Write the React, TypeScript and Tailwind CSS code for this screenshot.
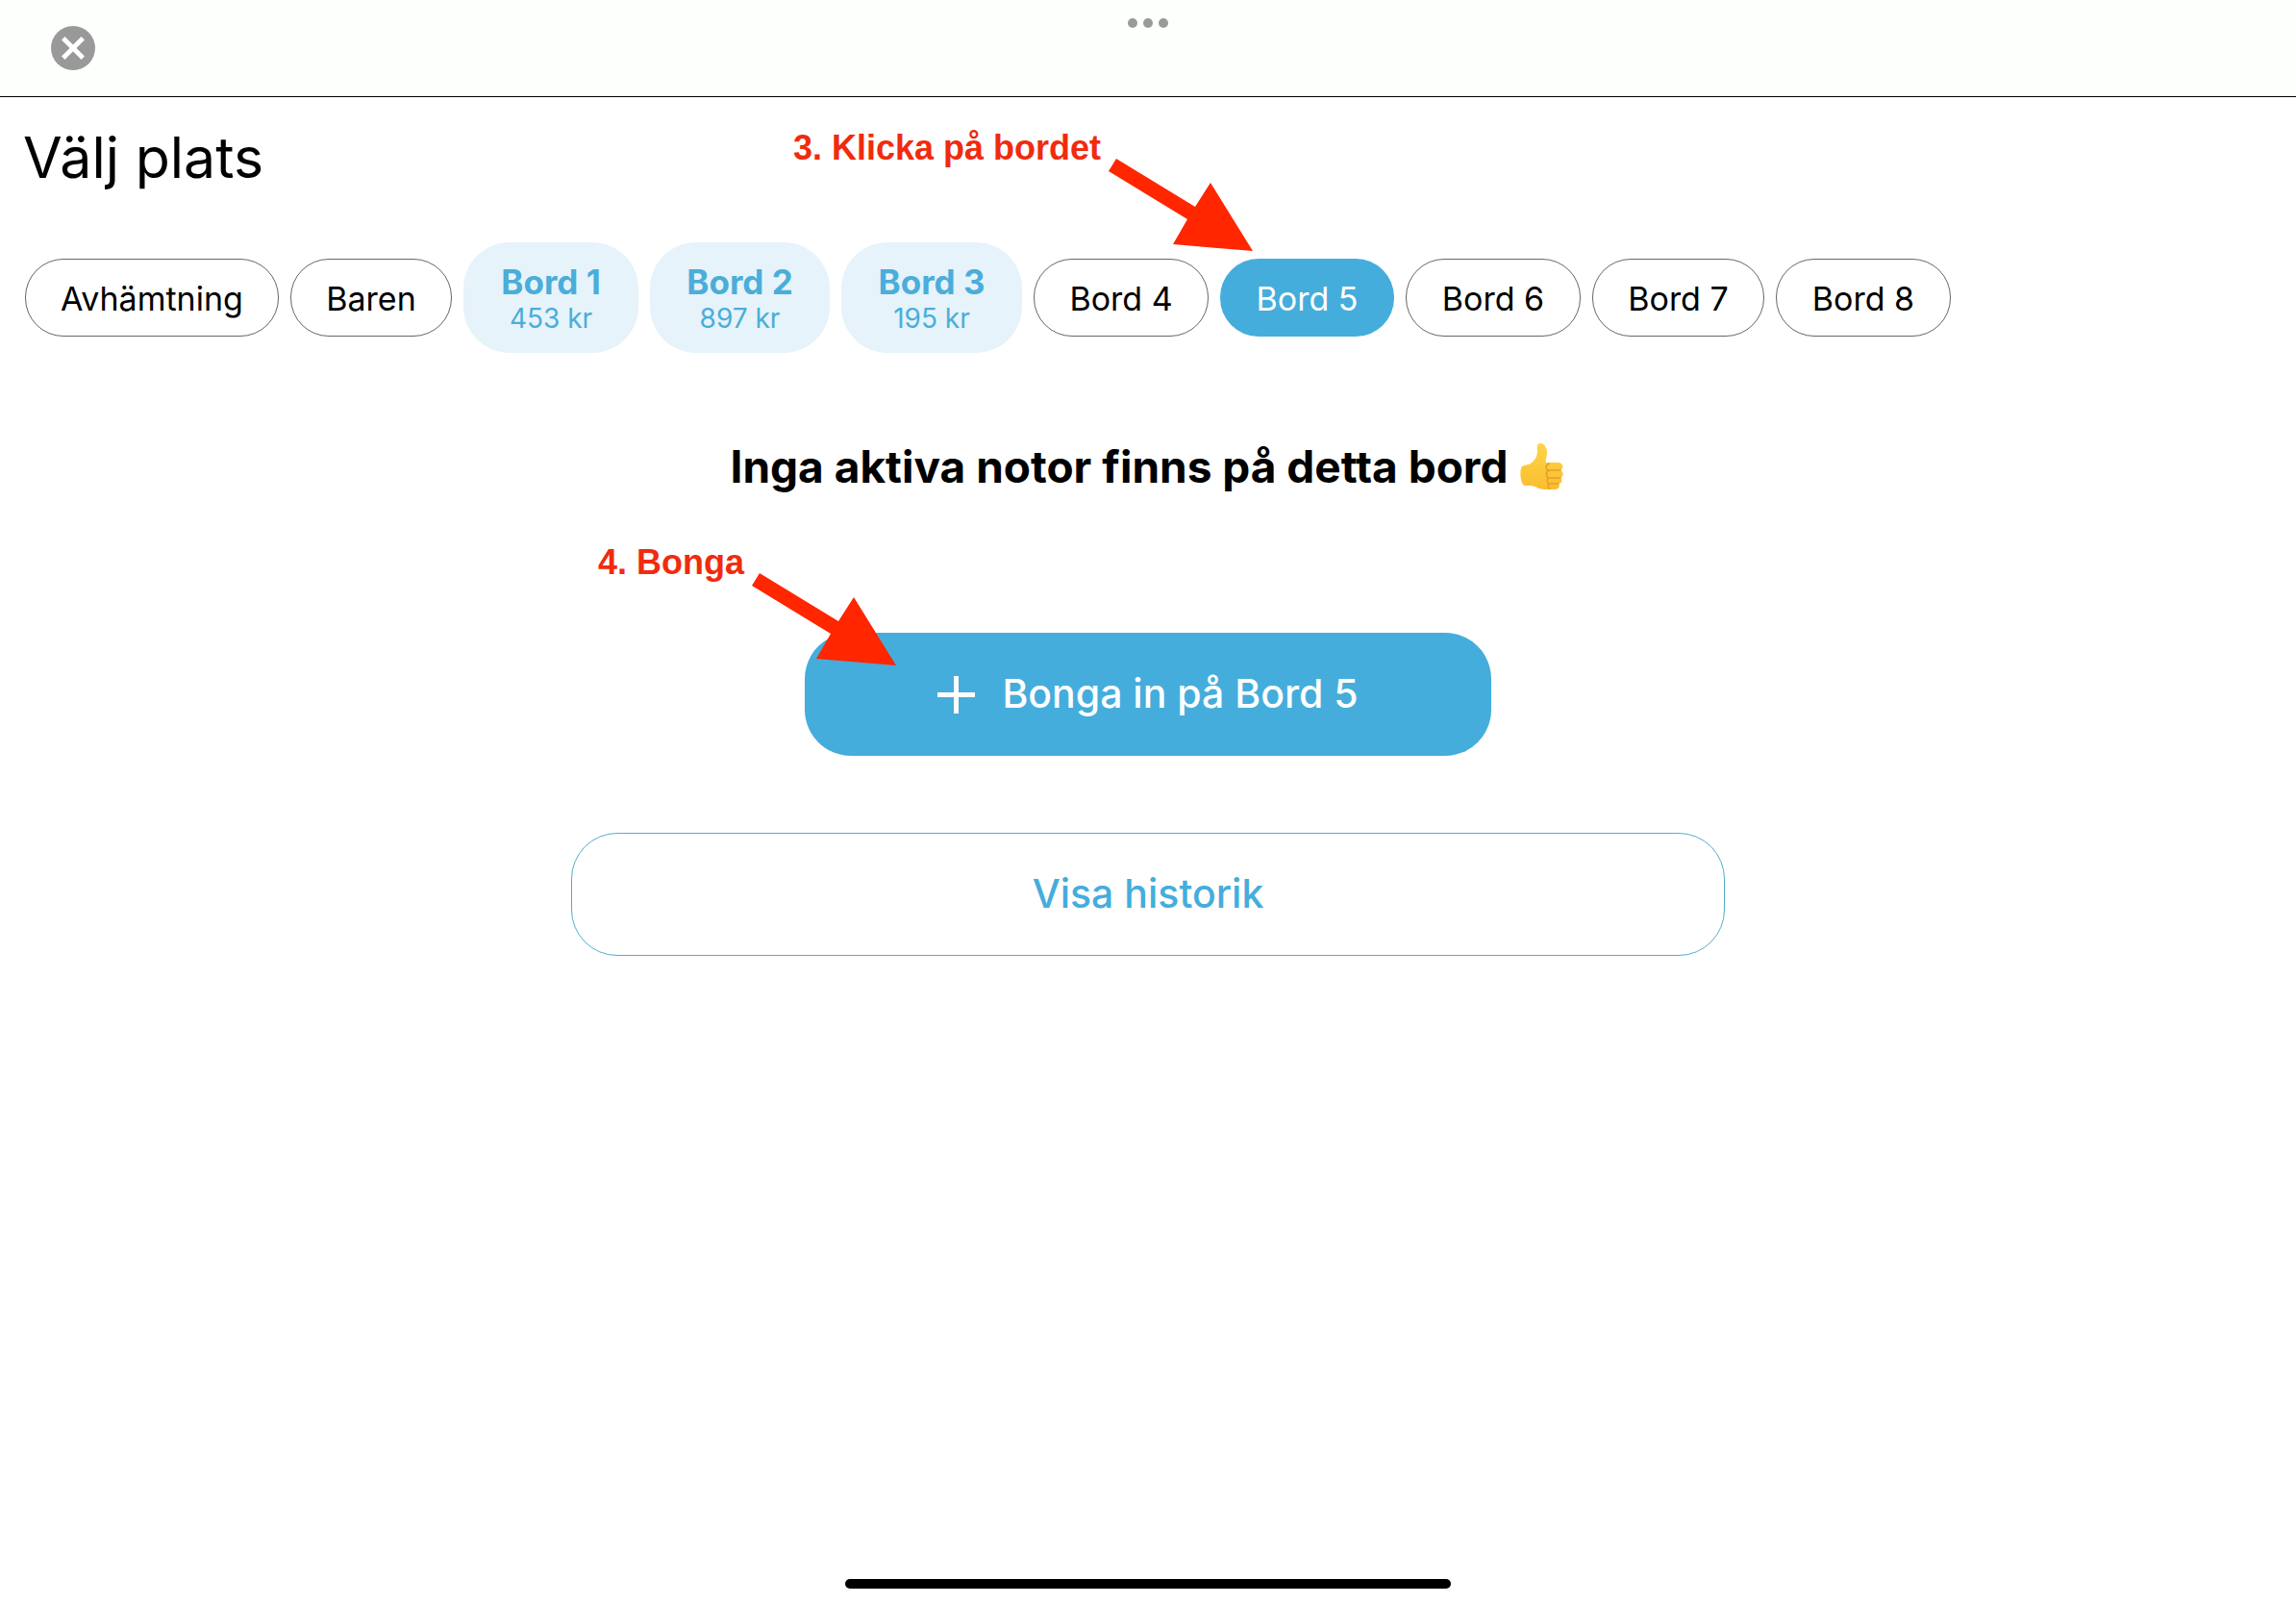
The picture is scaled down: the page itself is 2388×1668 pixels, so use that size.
import { useState } from 'react'
import clsx from 'clsx'

type Place = { name: string; width: string; total?: string }

const places: Place[] = [
  { name: 'Avhämtning', width: 'w-[264px]' },
  { name: 'Baren', width: 'w-[168px]' },
  { name: 'Bord 1', width: 'w-[182px]', total: '453 kr' },
  { name: 'Bord 2', width: 'w-[187px]', total: '897 kr' },
  { name: 'Bord 3', width: 'w-[188px]', total: '195 kr' },
  { name: 'Bord 4', width: 'w-[182px]' },
  { name: 'Bord 5', width: 'w-[181px]' },
  { name: 'Bord 6', width: 'w-[182px]' },
  { name: 'Bord 7', width: 'w-[179px]' },
  { name: 'Bord 8', width: 'w-[182px]' },
]

function Arrow() {
  return (
    <svg width="150" height="96" viewBox="0 0 150 96" className="mt-8 shrink-0" aria-hidden="true">
      <path d="M8 0 90 50 106 25 150 96 67 89 82 63 0 13Z" fill="#ff2600" />
    </svg>
  )
}

function Hint({ text, className }: { text: string; className: string }) {
  return (
    <div className={clsx('pointer-events-none absolute z-10 flex items-start gap-2 whitespace-nowrap', className)}>
      <span className="font-['Liberation_Sans',Arial,sans-serif] text-[36px] leading-[42px] font-bold text-[#f02b0e]">
        {text}
      </span>
      <Arrow />
    </div>
  )
}

function ThumbsUp() {
  return (
    <svg width="48" height="50" viewBox="0 0 48 50" role="img" aria-label="Tumme upp">
      <defs>
        <linearGradient id="thumb" x1="0" y1="0" x2="0" y2="1">
          <stop offset="0" stopColor="#ffd54a" />
          <stop offset="1" stopColor="#f9bd2e" />
        </linearGradient>
      </defs>
      <path
        d="M2 27C3 23 8 24 12 22C17 18 19 14 19 9C18 4 19 1 22 1C27 1 29 6 29 11C29 15 27 18 28 21H41C47 22 46 28 43 29C47 31 46 36 43 37C46 39 44 43 41 43C43 46 41 49 37 49H27C20 49 17 45 12 45C8 45 4 46 3 42C1 37 1 31 2 27Z"
        fill="url(#thumb)"
      />
      <path
        d="M31 29H43M31 37H43M31 43H41M31 22C27 24 27 28 31 29C27 31 28 36 31 37C28 39 29 42 31 43C29 45 30 47 32 48"
        fill="none"
        stroke="#e3a02a"
        strokeWidth="1.5"
        strokeLinecap="round"
      />
    </svg>
  )
}

export default function App() {
  const [selected, setSelected] = useState('Bord 5')

  return (
    <div className="flex min-h-screen flex-col bg-white font-[Inter,sans-serif] text-black">
      <header className="relative flex h-[101px] items-center border-b border-black bg-[#fcfffc] px-[53px]">
        <button aria-label="Stäng">
          <svg width="46" height="46" viewBox="0 0 47 47">
            <circle cx="23.5" cy="23.5" r="23.5" fill="#999" />
            <path d="M13 13 34 34M34 13 13 34" stroke="#fff" strokeWidth="5" />
          </svg>
        </button>
        <div className="absolute inset-x-0 top-[19px] flex justify-center gap-1.5">
          <span className="size-2.5 rounded-full bg-[#999b97]" />
          <span className="size-2.5 rounded-full bg-[#999b97]" />
          <span className="size-2.5 rounded-full bg-[#999b97]" />
        </div>
      </header>

      <main className="flex grow flex-col pt-[23px]">
        <h1 className="px-6 text-[59px] leading-20">Välj plats</h1>

        {/* Places */}
        <div className="mt-12 flex items-center gap-3 px-[26px]">
          {places.map(({ name, width, total }) => (
            <div key={name} className={clsx('relative shrink-0', width)}>
              <button
                onClick={() => setSelected(name)}
                className={clsx(
                  'flex w-full flex-col items-center justify-center pt-0.5 whitespace-nowrap',
                  total ? 'h-[115px] rounded-[48px]' : 'h-[81px] rounded-[40px]',
                  selected === name && 'bg-[#45addc] text-white',
                  selected !== name && total && 'bg-[#e6f3fa] text-[#4badd9]',
                  selected !== name && !total && 'border border-[#666]'
                )}
              >
                <span className={clsx('leading-10', total ? 'text-[35px] font-bold' : 'text-[34px]')}>{name}</span>
                {total && <span className="text-[28px] leading-9">{total}</span>}
              </button>
              {name === 'Bord 5' && <Hint text="3. Klicka på bordet" className="right-[147px] bottom-full mb-2" />}
            </div>
          ))}
        </div>

        {/* Selected place */}
        <section className="flex flex-col items-center">
          <h2 className="mt-[88px] flex items-center gap-3 text-[46px] leading-[60px] font-bold">
            Inga aktiva notor finns på detta bord
            <ThumbsUp />
          </h2>

          <div className="relative mt-[143px] w-[714px]">
            <button className="flex h-32 w-full items-center justify-center gap-7 rounded-[48px] bg-[#45addc] text-[41px] font-medium text-white">
              <svg width="39" height="39" viewBox="0 0 39 39" aria-hidden="true">
                <path d="M19.5 0V39M0 19.5H39" stroke="#fff" strokeWidth="5" />
              </svg>
              Bonga in på {selected}
            </button>
            <Hint text="4. Bonga" className="right-[619px] bottom-[94px]" />
          </div>

          <button className="mt-20 h-32 w-[1200px] rounded-[48px] border border-[#52aecb] text-[41px] font-medium text-[#45addc]">
            Visa historik
          </button>
        </section>
      </main>

      <div className="mb-4 h-2.5 w-[630px] self-center rounded-full bg-black" />
    </div>
  )
}
